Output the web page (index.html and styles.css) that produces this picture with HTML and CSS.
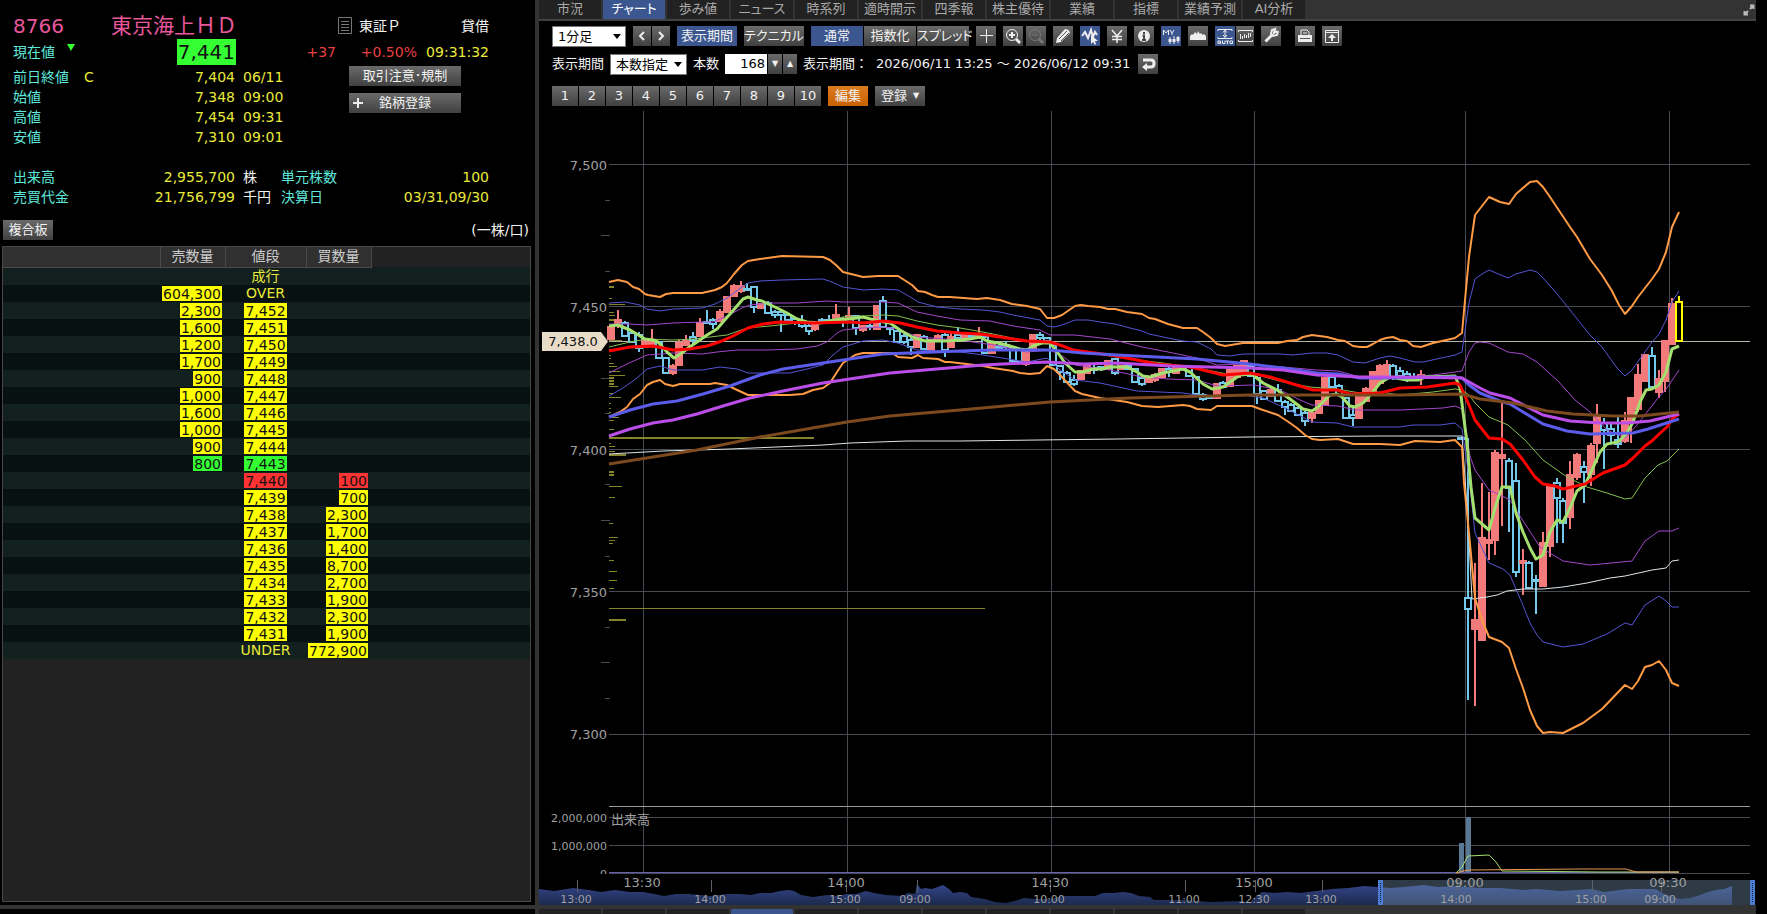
FILE: index.html
```html
<!DOCTYPE html>
<html lang="ja">
<head>
  <meta charset="UTF-8">
  <title>8766 東京海上ＨＤ</title>
  <meta name="viewport" content="width=device-width, initial-scale=1">
  <link rel="stylesheet" href="styles.css">
</head>
<body>

  <main class="workspace">
    <section class="board">
      <div class="quote">
        <div class="quote-head">
          <span class="code">8766</span>
          <h1>東京海上ＨＤ</h1>
          <svg class="doc-icon" width="14" height="17" viewBox="0 0 14 17"><path d="M.5.5h13v16H.5zM3 4.500h8M3 7.500h8M3 10.500h8M3 13.500h8"/></svg>
          <span class="market">東証Ｐ</span>
          <span class="margin-type">貸借</span>
        </div>
        <div class="price-row">
          <span class="label">現在値</span>
          <svg class="down-mark" width="8" height="7" viewBox="0 0 8 7"><path d="M0 0h8L4 7z"/></svg>
          <span class="price-box"><span class="price">7,441</span></span>
          <span class="change">+37</span>
          <span class="percent">+0.50%</span>
          <time class="time">09:31:32</time>
        </div>
        <div class="detail">
          <div class="detail-rows">
            <div class="row"><span class="label">前日終値</span><span class="flag">C</span><span class="value">7,404</span><span>06/11</span></div>
            <div class="row"><span class="label">始値</span><span class="flag"></span><span class="value">7,348</span><span>09:00</span></div>
            <div class="row"><span class="label">高値</span><span class="flag"></span><span class="value">7,454</span><span>09:31</span></div>
            <div class="row"><span class="label">安値</span><span class="flag"></span><span class="value">7,310</span><span>09:01</span></div>
          </div>
          <div class="detail-buttons">
            <button class="btn">取引注意･規制</button>
            <button class="btn btn-add"><svg width="10" height="10" viewBox="0 0 10 10"><path d="M5 0v10M0 5h10"/></svg>銘柄登録</button>
          </div>
        </div>
        <div class="totals">
          <div class="row"><span class="label">出来高</span><span class="value">2,955,700</span><span class="unit">株</span><span class="label">単元株数</span><span class="last">100</span></div>
          <div class="row"><span class="label">売買代金</span><span class="value">21,756,799</span><span class="unit">千円</span><span class="label">決算日</span><span class="last">03/31,09/30</span></div>
        </div>
      </div>

      <div class="board-bar">
        <button class="btn">複合板</button>
        <span>(一株/口)</span>
      </div>

      <div class="depth">
        <table>
          <colgroup><col class="c-blank"><col class="c-qty"><col class="c-price"><col class="c-qty"><col></colgroup>
          <thead>
            <tr><th></th><th>売数量</th><th>値段</th><th>買数量</th><td></td></tr>
          </thead>
          <tbody>
            <tr><td></td><td></td><td>成行</td><td></td><td></td></tr>
            <tr><td></td><td><b>604,300</b></td><td>OVER</td><td></td><td></td></tr>
            <tr><td></td><td><b>2,300</b></td><td><b>7,452</b></td><td></td><td></td></tr>
            <tr><td></td><td><b>1,600</b></td><td><b>7,451</b></td><td></td><td></td></tr>
            <tr><td></td><td><b>1,200</b></td><td><b>7,450</b></td><td></td><td></td></tr>
            <tr><td></td><td><b>1,700</b></td><td><b>7,449</b></td><td></td><td></td></tr>
            <tr><td></td><td><b>900</b></td><td><b>7,448</b></td><td></td><td></td></tr>
            <tr><td></td><td><b>1,000</b></td><td><b>7,447</b></td><td></td><td></td></tr>
            <tr><td></td><td><b>1,600</b></td><td><b>7,446</b></td><td></td><td></td></tr>
            <tr><td></td><td><b>1,000</b></td><td><b>7,445</b></td><td></td><td></td></tr>
            <tr><td></td><td><b>900</b></td><td><b>7,444</b></td><td></td><td></td></tr>
            <tr class="best-ask"><td></td><td><b>800</b></td><td><b>7,443</b></td><td></td><td></td></tr>
            <tr class="best-bid"><td></td><td></td><td><b>7,440</b></td><td><b>100</b></td><td></td></tr>
            <tr><td></td><td></td><td><b>7,439</b></td><td><b>700</b></td><td></td></tr>
            <tr><td></td><td></td><td><b>7,438</b></td><td><b>2,300</b></td><td></td></tr>
            <tr><td></td><td></td><td><b>7,437</b></td><td><b>1,700</b></td><td></td></tr>
            <tr><td></td><td></td><td><b>7,436</b></td><td><b>1,400</b></td><td></td></tr>
            <tr><td></td><td></td><td><b>7,435</b></td><td><b>8,700</b></td><td></td></tr>
            <tr><td></td><td></td><td><b>7,434</b></td><td><b>2,700</b></td><td></td></tr>
            <tr><td></td><td></td><td><b>7,433</b></td><td><b>1,900</b></td><td></td></tr>
            <tr><td></td><td></td><td><b>7,432</b></td><td><b>2,300</b></td><td></td></tr>
            <tr><td></td><td></td><td><b>7,431</b></td><td><b>1,900</b></td><td></td></tr>
            <tr><td></td><td></td><td>UNDER</td><td><b>772,900</b></td><td></td></tr>
          </tbody>
        </table>
      </div>
    </section>

    <section class="chart-panel">
      <nav class="tabs">
        <button>市況</button>
        <button class="active">チャート</button>
        <button>歩み値</button>
        <button>ニュース</button>
        <button>時系列</button>
        <button>適時開示</button>
        <button>四季報</button>
        <button>株主優待</button>
        <button>業績</button>
        <button>指標</button>
        <button>業績予測</button>
        <button>AI分析</button>
        <button class="expand" aria-label="拡大"><svg width="12" height="12" viewBox="0 0 12 12"><path d="M7 1.500h3.500V5M10 2L7 5M5 10.500H1.500V7M2 10l3-3"/></svg></button>
      </nav>

      <div class="toolbar">
        <div class="tools tools-main">
          <span class="select"><select class="foot" aria-label="足種"><option>1分足</option></select></span>
          <span class="group">
            <button class="btn narrow" aria-label="前へ"><svg width="8" height="10" viewBox="0 0 8 10"><path d="M6 1L2 5l4 4"/></svg></button>
            <button class="btn narrow" aria-label="次へ"><svg width="8" height="10" viewBox="0 0 8 10"><path d="M2 1l4 4-4 4"/></svg></button>
          </span>
          <button class="btn wide on">表示期間</button>
          <button class="btn wide">テクニカル</button>
          <span class="group">
            <button class="btn mode on">通常</button>
            <button class="btn mode">指数化</button>
            <button class="btn mode">スプレッド</button>
          </span>
          <button class="btn icon" aria-label="十字"><svg viewBox="0 0 20 20"><path d="M10.500 3v14M4 9.500h13"/></svg></button>
          <span class="group group-zoom">
            <button class="btn icon" aria-label="拡大"><svg viewBox="0 0 20 20"><circle cx="9" cy="9" r="5.500"/><path d="M13 13l4 4" stroke-width="3"/><path d="M9 6v6M6 9h6" stroke-width="2"/></svg></button>
            <button class="btn icon off" aria-label="縮小"><svg viewBox="0 0 20 20"><circle cx="9" cy="9" r="5.500"/><path d="M13 13l4 4" stroke-width="3"/><path d="M6 9h6"/></svg></button>
          </span>
          <button class="btn icon" aria-label="描画"><svg viewBox="0 0 20 20"><path class="fill" d="M3 17l1-5 8-9q4 0 5 4l-9 9z"/><path d="M6 13l8-8M8 15l8-8" stroke="#555"/></svg></button>
          <button class="btn icon on" aria-label="選択"><svg viewBox="0 0 20 20"><path d="M2 10l3-4 3 6 3-8 2 7 2-5 2 3" stroke-width="2"/><path class="fill" d="M11 9v9l2-2 2 3 1-1-1-3h3z"/></svg></button>
          <button class="btn icon" aria-label="円"><svg viewBox="0 0 20 20"><path d="M5 4l5 6 5-6M10 10v7M5 10.500h10M5 13.500h10" stroke-width="1.500"/></svg></button>
          <button class="btn icon" aria-label="情報"><svg viewBox="0 0 20 20"><circle class="fill" cx="10" cy="10" r="6"/><path d="M10 6v2M8.500 9.500H10V14M8 14h4" stroke="#444" stroke-width="2"/></svg></button>
          <button class="btn icon on" aria-label="MYチャート"><svg viewBox="0 0 20 20"><path d="M2.500 9V4L5 7l2.500-3v5M9 4l2 3 2-3M11 7v2M9 11v7M13 10v8M17 10v7"/><path d="M9 13v3M13 13v3M17 11v4" stroke-width="3"/></svg></button>
          <button class="btn icon" aria-label="山"><svg viewBox="0 0 20 20"><path class="fill" d="M2 14v-4l2-2 1 1 2-3 2 2 1-3 2 3 1-1 2 2 1-1 2 2v4z"/></svg></button>
          <span class="group">
            <button class="btn icon on" aria-label="自動"><svg viewBox="0 0 20 20"><path d="M3 5V3.500h14V5M3 11v1.500h14V11M10 5v6M8 6.500L10 4l2 2.500M8 9l2 2.500L12 9"/><path d="M3 18v-3h2.500v3M3 17h2.500M7.500 14.500v3H10v-3M11 15h3M12.500 15v3M15 15h2.500v2.500H15z"/></svg></button>
            <button class="btn icon fit" aria-label="固定"><svg viewBox="0 0 18 20"><path d="M2.500 6V4.500h14V6M2.500 14v1.500h14V14M4.500 8v5M6.500 10v3M8.500 8v4M10.500 9v3M12.500 7v5M14.500 7v4"/></svg></button>
          </span>
          <button class="btn icon" aria-label="設定"><svg viewBox="0 0 20 20"><path d="M4.500 15.500l6-6" stroke-width="3"/><path d="M16 5l-3 2 1-4-3 1-1 4 2 2 4-1 1-4" stroke-width="2"/></svg></button>
          <span class="group group-print">
            <button class="btn icon" aria-label="印刷"><svg viewBox="0 0 20 20"><path d="M6 9V4h6l2 2v3M8 7h4" /><path class="fill" d="M3 9h14v7H3z"/><path d="M5 12.500h10" stroke="#555"/></svg></button>
            <button class="btn icon" aria-label="出力"><svg viewBox="0 0 20 20"><path d="M3.500 4.500h13v12h-13zM3 6.500h14"/><path class="fill" d="M10 8l4 4h-3v3H9v-3H6z"/></svg></button>
          </span>
        </div>

        <div class="tools tools-range">
          <label for="range">表示期間</label>
          <span class="select"><select id="range" class="range"><option>本数指定</option></select></span>
          <label for="count">本数</label>
          <span class="group">
            <input id="count" type="text" value="168">
            <button class="btn step" aria-label="減らす">▼</button>
            <button class="btn step" aria-label="増やす">▲</button>
          </span>
          <span>表示期間：</span>
          <span class="dates">2026/06/11 13:25 ～ 2026/06/12 09:31</span>
          <button class="btn icon" aria-label="戻す"><svg viewBox="0 0 20 20"><path d="M5 6h8q3 0 3 3.500T13 13H8" stroke-width="3"/><path class="fill" d="M9 9v8l-5-4z"/></svg></button>
        </div>

        <div class="tools">
          <span class="group">
            <button class="btn num">1</button>
            <button class="btn num">2</button>
            <button class="btn num">3</button>
            <button class="btn num">4</button>
            <button class="btn num">5</button>
            <button class="btn num">6</button>
            <button class="btn num">7</button>
            <button class="btn num">8</button>
            <button class="btn num">9</button>
            <button class="btn num">10</button>
          </span>
          <button class="btn edit">編集</button>
          <button class="btn save">登録<i>▼</i></button>
        </div>
      </div>

      <svg class="chart" viewBox="539 107 1228 798">
        <defs>
          <linearGradient id="navFill" x1="0" y1="0" x2="0" y2="1">
            <stop offset="0" stop-color="#34458a"/>
            <stop offset="1" stop-color="#1c2a4c"/>
          </linearGradient>
        </defs>

        <!-- グリッド -->
        <g class="grid">
          <path d="M609 164.500H1750M609 306.500H1750M609 449.500H1750M609 591.500H1750M609 734.500H1750M609 817.500H1750M609 845.500H1750M609 873.500H1750"/>
          <path d="M643.500 111V874M847.500 111V874M1051.500 111V874M1254.500 111V874M1465.500 111V874M1669.500 111V874"/>
          <path d="M605 200.500h5M601 235.500h9M605 271.500h5M601 378.500h9M605 413.500h5M605 484.500h5M601 520.500h9M605 556.500h5M605 627.500h5M601 662.500h9M605 698.500h5"/>
          <path class="divider" d="M609 806.500H1750"/>
        </g>

        <!-- 価格帯別出来高 -->
        <path class="profile" d="M609 298.500h3M609 304.500h16M609 312.500h5M609 315.500h6M609 330.500h5M609 340.500h13M609 349.500h3M609 355.500h2M609 358.500h2M609 363.500h5M609 366.500h8M609 371.500h11M609 375.500h16M609 386.500h9M609 393.500h5M609 397.500h12M609 403.500h2M609 408.500h2M609 412.500h2M609 417.500h10M609 420.500h5M609 429.500h5M609 443.500h2M609 446.500h6M609 451.500h6M609 486.500h13M609 497.500h6M609 523.500h4M609 537.500h9M609 540.500h6M609 543.500h4M609 560.500h5M609 571.500h8M609 580.500h8M609 588.500h5M609 608.500h376"/>
        <path class="profile thick" d="M609 287h5M609 320h6M609 326h6M609 378h5M609 381h5M609 384h5M609 438h205M609 455h17M609 472h5M609 475h5M609 620h17"/>

        <path class="last-line" d="M609 341.500H1750"/>
        <g id="candles"></g>

        <!-- ボリンジャーバンド -->
        <polyline class="thin blue" points="609,303 625,302 640,305 647,309 660,311 673,309 702,308 715,304 727,298 742,287 748,283 760,281 782,280 823,279 832,282 843,287 863,290 883,289 898,290 912,298 918,302 937,307 960,309 983,310 1000,312 1013,315 1040,320 1047,326 1054,327 1062,325 1075,320 1088,320 1100,322 1115,324 1130,328 1142,331 1149,334 1168,338 1183,341 1197,342 1211,349 1217,355 1230,356 1243,354 1263,354 1280,354 1293,355 1312,353 1327,353 1338,355 1353,362 1365,363 1380,358 1390,356 1400,358 1415,362 1423,362 1455,355 1462,352 1469,303 1475,279 1482,274 1489,270 1508,278 1516,274 1530,270 1537,272 1543,278 1558,295 1570,310 1590,335 1602,347 1617,368 1625,376 1632,370 1652,342 1659,334 1666,320 1672,302 1679,291"/>
        <polyline class="thin purple" points="609,324 630,324 647,325 673,323 702,322 713,322 727,316 742,308 750,305 770,303 797,303 827,301 843,302 883,302 898,303 917,312 937,316 960,320 990,321 1013,326 1040,330 1050,335 1075,335 1110,339 1142,347 1168,352 1197,358 1217,365 1243,364 1283,367 1317,370 1338,371 1360,377 1380,377 1400,377 1433,375 1455,372 1462,371 1469,352 1475,343 1480,342 1489,343 1508,352 1523,354 1537,362 1558,381 1575,400 1590,412 1607,430 1625,438 1637,425 1658,398 1667,388 1679,370"/>
        <polyline class="thin green" points="609,347 630,342 647,339 673,340 693,339 710,337 727,335 747,328 770,326 797,323 817,323 843,317 863,316 883,315 898,316 917,321 937,325 960,328 983,332 1027,341 1050,342 1075,350 1110,356 1137,360 1163,363 1197,368 1227,374 1250,373 1283,382 1310,387 1337,389 1360,393 1380,392 1400,395 1433,392 1455,389 1462,390 1469,395 1475,403 1489,417 1508,425 1525,440 1543,460 1567,477 1587,487 1607,493 1625,499 1632,498 1645,478 1658,465 1667,461 1679,449"/>
        <polyline class="thin purple" points="609,373 627,364 647,355 673,353 702,354 717,352 737,350 767,350 797,349 817,346 827,342 837,333 843,330 863,328 883,327 898,329 917,337 960,340 1000,346 1027,352 1050,350 1062,356 1075,365 1110,370 1142,377 1168,379 1197,380 1217,386 1254,385 1280,390 1300,400 1312,405 1338,406 1355,410 1380,410 1400,410 1443,408 1455,406 1462,409 1470,456 1475,470 1489,490 1500,495 1510,500 1518,513 1540,547 1563,561 1590,565 1632,561 1645,541 1659,531 1672,531 1679,528"/>
        <polyline class="thin blue" points="609,396 623,388 637,378 647,369 660,366 673,370 702,370 720,367 737,369 748,373 790,373 807,369 823,365 833,355 843,347 863,341 883,340 898,343 917,350 960,352 983,355 1027,362 1047,358 1060,370 1075,380 1100,383 1137,391 1183,393 1203,396 1243,395 1263,398 1283,407 1312,422 1337,423 1353,427 1380,427 1400,427 1413,425 1440,425 1455,423 1462,429 1469,477 1475,533 1489,563 1503,569 1510,575 1522,603 1530,623 1537,635 1543,642 1563,647 1583,644 1607,634 1625,623 1632,625 1645,605 1659,596 1666,601 1672,607 1679,607"/>
        <polyline class="thin white" points="609,454 663,451 730,449 823,445 850,443 907,441 960,441 1117,439 1250,437 1380,436 1462,436 1468,520 1472,599 1487,597 1497,595 1507,591 1523,589 1543,589 1563,587 1587,583 1610,578 1625,576 1652,570 1666,568 1672,561 1679,560"/>
        <polyline class="band" points="609,282 618,280 627,282 633,287 639,289 645,294 648,295 660,297 666,294 673,293 702,293 715,290 722,287 727,283 734,274 742,265 748,261 760,259 782,256 823,257 830,260 837,266 843,272 863,277 878,276 898,276 912,285 918,291 925,292 932,295 938,297 950,297 977,299 987,298 1000,300 1012,304 1027,306 1040,309 1047,318 1054,318 1062,315 1075,306 1081,305 1088,306 1100,307 1108,309 1115,309 1127,312 1142,314 1149,318 1155,319 1168,324 1183,328 1197,328 1203,332 1211,338 1217,344 1225,346 1243,343 1278,343 1287,341 1297,340 1303,337 1312,335 1327,337 1338,340 1345,341 1353,346 1360,347 1367,347 1373,344 1380,340 1386,338 1393,337 1400,340 1407,341 1413,346 1421,347 1433,343 1442,341 1455,338 1462,333 1465,300 1469,257 1475,215 1482,206 1489,197 1500,202 1509,204 1516,194 1530,182 1537,181 1543,187 1550,197 1558,209 1570,227 1577,237 1590,259 1602,275 1612,291 1619,305 1625,314 1632,306 1638,297 1652,279 1659,269 1666,252 1672,227 1679,212"/>
        <polyline class="band" points="609,417 620,412 627,407 633,399 640,394 647,385 653,382 660,380 665,384 673,386 680,384 710,384 715,383 727,385 735,389 748,395 790,395 803,394 813,390 823,388 830,383 837,372 843,363 855,355 863,353 892,353 898,357 912,358 918,355 923,358 938,359 945,362 950,362 983,366 993,368 1013,371 1020,373 1030,374 1040,373 1047,366 1054,369 1060,375 1075,391 1082,394 1100,398 1127,402 1142,406 1158,407 1183,405 1190,406 1197,409 1211,410 1217,406 1252,406 1260,409 1278,415 1290,423 1297,428 1305,435 1312,439 1320,440 1338,439 1353,444 1380,444 1400,445 1415,441 1440,442 1455,440 1462,447 1464,483 1469,533 1475,598 1482,620 1489,637 1502,642 1509,648 1516,669 1523,688 1530,710 1537,726 1543,733 1550,732 1563,733 1583,723 1602,709 1625,685 1632,689 1638,681 1645,667 1652,665 1659,661 1666,670 1672,683 1679,686"/>

        <!-- 移動平均線 -->
        <polyline class="ma lime" points="609,326 618,325 630,330 645,339 653,340 658,342 667,352 674,358 682,353 688,348 697,342 707,335 717,329 723,322 730,314 737,306 743,299 748,297 757,300 762,301 777,308 787,313 797,319 807,322 820,323 837,320 850,319 863,317 878,321 890,323 900,330 912,337 925,341 933,341 945,341 960,340 970,339 980,337 987,341 1003,344 1020,349 1027,350 1033,346 1042,343 1050,343 1058,353 1065,363 1075,372 1083,372 1093,369 1103,369 1110,367 1127,367 1137,372 1143,376 1150,377 1163,373 1183,369 1190,372 1203,384 1212,389 1223,387 1240,375 1252,374 1263,383 1277,390 1290,399 1303,409 1312,411 1318,407 1330,395 1337,394 1342,397 1350,406 1355,407 1363,403 1372,393 1380,383 1390,377 1407,380 1418,380 1425,377 1455,376 1460,388 1467,443 1471,487 1475,518 1489,530 1495,508 1502,487 1510,487 1516,513 1523,532 1530,548 1536,559 1543,555 1550,532 1557,520 1563,522 1570,508 1577,491 1585,485 1592,470 1600,452 1607,444 1618,442 1627,433 1633,422 1640,402 1646,390 1652,389 1659,385 1666,372 1672,349 1679,346"/>
        <polyline class="ma red" points="609,351 630,347 653,346 663,348 673,350 690,349 707,346 722,341 733,336 748,328 763,324 780,322 813,323 850,322 863,323 883,321 900,323 917,327 937,331 960,333 980,334 1000,337 1027,341 1050,342 1060,345 1073,350 1110,355 1137,360 1157,364 1190,367 1203,370 1223,375 1250,373 1270,377 1290,383 1313,390 1337,390 1350,394 1380,393 1400,388 1427,387 1455,383 1460,385 1469,405 1475,420 1489,438 1502,439 1510,444 1523,460 1535,477 1543,484 1555,486 1563,489 1585,484 1603,473 1625,465 1633,458 1645,446 1653,440 1658,435 1667,427 1673,418 1679,414"/>
        <polyline class="ma blue" points="609,417 630,410 653,404 677,401 703,394 730,386 760,375 783,369 823,363 863,357 883,354 960,351 993,350 1050,350 1083,353 1117,355 1197,359 1250,364 1283,368 1317,373 1338,374 1360,378 1380,378 1455,377 1462,378 1469,385 1480,393 1500,401 1510,404 1543,424 1567,431 1590,434 1633,433 1648,429 1679,419"/>
        <polyline class="ma purple" points="609,436 630,429 653,423 673,420 697,414 723,406 750,398 783,391 823,383 863,377 890,373 960,367 983,365 1047,362 1083,364 1117,363 1170,366 1250,368 1283,370 1317,375 1360,377 1400,377 1462,378 1480,388 1490,393 1510,398 1543,415 1570,421 1600,423 1627,423 1650,421 1679,414"/>
        <polyline class="ma brown" points="609,464 697,450 760,437 847,422 890,416 960,410 1050,402 1130,398 1250,395 1283,395 1380,395 1400,395 1462,394 1480,399 1513,403 1547,411 1573,414 1613,416 1640,416 1679,412"/>

        <!-- 出来高 -->
        <path class="volume" d="M1459 843h5v30h-5zM1466 817h5v56h-5z"/>
        <path class="volume-base" d="M609 872.500H1679"/>
        <polyline class="thin lime" points="1456,873 1462,867 1468,856 1489,855 1496,862 1502,871 1600,872 1679,872"/>
        <polyline class="thin orange" points="1456,873 1468,870 1580,869 1626,869 1636,872 1679,872"/>

        <g class="axis">
          <g text-anchor="end">
            <text x="607" y="170">7,500</text>
            <text x="607" y="312">7,450</text>
            <text x="607" y="455">7,400</text>
            <text x="607" y="597">7,350</text>
            <text x="607" y="739">7,300</text>
            <g class="small">
              <text x="607" y="822">2,000,000</text>
              <text x="607" y="850">1,000,000</text>
              <svg x="590" y="865" width="20" height="9" viewBox="590 865 20 9"><text x="607" y="878">0</text></svg>
            </g>
          </g>
          <text x="611" y="824">出来高</text>
        </g>
        <path class="tag" d="M542 332h59l7 9.500-7 9.500h-59z"/>
        <text class="tag-text" x="573" y="346" text-anchor="middle">7,438.0</text>

        <!-- ナビゲーター -->
        <g class="navigator">
          <path fill="url(#navFill)" d="M539 905V889L554 891L573 888L589 890L601 892L615 890L630 892L643 892L654 894L664 896L676 894L688 894L700 895L710 896L728 894L740 894L751 895L760 893L771 893L780 891L789 890L794 891L801 895L813 897L827 895L838 896L846 894L856 894L866 891L874 893L886 895L902 896L908 893L915 894L917 884L921 889L925 888L932 889L943 885L949 889L953 893L960 892L967 893L971 897L985 899L995 902L1006 903L1014 901L1024 898L1034 899L1052 899L1062 896L1076 896L1095 896L1103 893L1113 893L1123 892L1131 893L1139 896L1150 897L1154 900L1184 900L1210 902L1240 901L1250 902L1254 898L1262 892L1274 893L1288 892L1300 893L1316 891L1332 889L1348 888L1364 886L1378 887L1390 888L1404 887L1424 885L1438 887L1456 886L1480 888L1500 888L1512 889L1524 890L1536 889L1560 891L1592 889L1604 892L1628 889L1656 889L1659 891L1662 893L1670 896L1680 899L1690 898L1700 895L1708 892L1716 890L1724 889L1732 886V905z"/>
          <rect class="selection" x="1380" y="880" width="373" height="25"/>
          <path class="ticks" d="M577.500 880v12M711.500 880v12M846.500 880v12M917.500 880v12M1050.500 880v12M1185.500 880v12M1255.500 880v12M1322.500 880v12M1457.500 880v12M1592.500 880v12M1661.500 880v12"/>
          <path class="handle" d="M1378 880h5v25h-5zM1750 880h5v25h-5z"/>
          <path class="grip" d="M1380.500 883v19M1752.500 883v19"/>
        </g>
        <g class="axis" text-anchor="middle">
          <text x="642" y="887">13:30</text>
          <text x="846" y="887">14:00</text>
          <text x="1050" y="887">14:30</text>
          <text x="1254" y="887">15:00</text>
          <text x="1465" y="887">09:00</text>
          <text x="1668" y="887">09:30</text>
          <g class="small">
            <text x="576" y="903">13:00</text>
            <text x="710" y="903">14:00</text>
            <text x="845" y="903">15:00</text>
            <text x="915" y="903">09:00</text>
            <text x="1049" y="903">10:00</text>
            <text x="1184" y="903">11:00</text>
            <text x="1254" y="903">12:30</text>
            <text x="1321" y="903">13:00</text>
            <text x="1456" y="903">14:00</text>
            <text x="1591" y="903">15:00</text>
            <text x="1660" y="903">09:00</text>
          </g>
        </g>
      </svg>
    </section>
  </main>

  <footer class="bottom-tabs">
    <span></span><span></span><span></span><span class="active"></span><span></span><span></span><span></span><span></span><span></span><span></span><span></span><span></span>
  </footer>

  <script src="script.js"></script>
</body>
</html>
```

FILE: styles.css
```css
:root {
  --line: #333;
  --tab: #222;
  --blue: #3c578f;
  --yellow: #eaea38;
  --cyan: #5fe8dc;
  --text: #f2f2f2;
}

* {
  box-sizing: border-box;
}

body {
  margin: 0;
  min-height: 100vh;
  display: flex;
  flex-direction: column;
  background: #000;
  color: var(--text);
  font: 14px/20px "DejaVu Sans", "Noto Sans CJK JP", sans-serif;
}

button, select, input {
  font: inherit;
  color: inherit;
  margin: 0;
  padding: 0;
  border: 0;
  border-radius: 0;
}

button {
  cursor: pointer;
}

.workspace {
  flex: 1;
  display: grid;
  grid-template-columns: 535px minmax(0, 1fr);
}

/* 銘柄情報 */
.board {
  display: flex;
  flex-direction: column;
  padding-bottom: 3px;
}

.quote {
  padding: 12px 46px 0 13px;
  color: var(--yellow);
}

.quote .label {
  color: var(--cyan);
}

.quote-head {
  display: flex;
  align-items: center;
  height: 27px;
  color: var(--text);
}

.code, h1 {
  margin: 0;
  font-size: 21px;
  font-weight: normal;
  color: #e8579b;
}

.code {
  width: 98px;
  font-size: 20px;
}

h1 {
  width: 227px;
}

.doc-icon {
  fill: none;
  stroke: #777;
}

.market {
  margin-left: 7px;
}

.margin-type {
  margin-left: auto;
}

.price-row {
  display: flex;
  align-items: center;
  height: 26px;
}

.price-row .label {
  width: 54px;
}

.down-mark {
  align-self: flex-start;
  margin-top: 5px;
  fill: #3f3;
}

.price-box {
  width: 161px;
  text-align: right;
}

.price {
  display: inline-block;
  padding: 0 1px;
  background: #3f3;
  color: #111;
  font-size: 20px;
  line-height: 26px;
}

.change, .percent {
  color: #e84040;
  text-align: right;
}

.change {
  width: 100px;
}

.percent {
  width: 81px;
}

.time {
  margin-left: auto;
}

.detail {
  display: flex;
  justify-content: space-between;
  padding: 1px 28px 20px 0;
}

.row {
  display: flex;
  height: 20px;
}

.detail-rows {
  padding-top: 1px;
}

.detail .label {
  width: 71px;
}

.flag {
  width: 50px;
}

.detail .value {
  width: 101px;
  margin-right: 8px;
  text-align: right;
}

.detail-buttons {
  width: 112px;
  display: flex;
  flex-direction: column;
  gap: 7px;
}

.btn {
  height: 20px;
  color: var(--text);
  line-height: 18px;
  font-size: 13px;
  font-feature-settings: "palt";
  background: linear-gradient(#6a6a6a, #404040);
  white-space: nowrap;
}

.btn-add {
  display: flex;
  align-items: center;
  gap: 16px;
  padding-left: 4px;
}

.btn-add svg {
  stroke: #eee;
  stroke-width: 2;
}

.totals .row > .label:first-child {
  width: 90px;
}

.totals .value {
  width: 132px;
  text-align: right;
}

.unit {
  width: 38px;
  margin-left: 8px;
  color: var(--text);
}

.last {
  margin-left: auto;
}

.board-bar {
  display: flex;
  justify-content: space-between;
  align-items: center;
  padding: 13px 6px 6px 3px;
}

.board-bar .btn {
  width: 50px;
}

/* 板 */
.depth {
  flex: 1;
  margin: 0 4px 0 2px;
  border: 1px solid #484848;
  background: #222;
}

table {
  width: 100%;
  table-layout: fixed;
  border-collapse: collapse;
}

.c-blank {
  width: 157px;
}

.c-qty {
  width: 65px;
}

.c-price {
  width: 81px;
}

thead tr {
  height: 20px;
}

th {
  padding: 0;
  border-right: 1px solid #4a4a4a;
  border-bottom: 1px solid #4a4a4a;
  background: #303030;
  color: #ccc;
  font-weight: normal;
  line-height: 19px;
}

tbody tr {
  height: 17px;
  background: #12201f;
}

tbody tr:nth-child(even) {
  background: #081112;
}

tbody td {
  height: 17px;
  padding: 0;
  color: var(--yellow);
  line-height: 17px;
  text-align: center;
}

tbody td:nth-child(2), tbody td:nth-child(4) {
  padding-right: 3px;
  text-align: right;
}

td b {
  display: inline-block;
  height: 15px;
  padding: 0 1px;
  overflow: hidden;
  background: #ff0;
  color: #111;
  font-weight: normal;
  line-height: 17px;
  vertical-align: top;
  margin-top: 1px;
}

.best-ask b {
  background: #3f3;
}

.best-bid b {
  background: #f33;
}

/* チャート */
.chart-panel {
  border-left: 4px solid var(--line);
}

.tabs {
  display: flex;
  gap: 2px;
  height: 21px;
  margin-right: 11px;
  border-bottom: 2px solid #424242;
  background: var(--line);
}

.tabs button {
  width: 62px;
  height: 19px;
  background: var(--tab);
  color: #aaa;
  font-size: 13px;
  line-height: 16px;
  font-feature-settings: "palt";
  padding-bottom: 2px;
}

.tabs .active {
  background: var(--blue);
  color: #fff;
}

.tabs .expand {
  width: 12px;
  margin-left: auto;
  margin-right: 1px;
  padding: 1px 0 0;
  background: none;
}

.expand svg {
  display: block;
  fill: none;
  stroke: #bbb;
  stroke-width: 2;
}

.toolbar {
  height: 86px;
  padding: 5px 0 0 13px;
  font-size: 13px;
}

.tools {
  display: flex;
  align-items: center;
  gap: 7px;
  height: 20px;
  white-space: nowrap;
}

.tools-range {
  gap: 6px;
  margin: 8px 0 12px;
}

.group {
  display: flex;
  gap: 1px;
}

.group-zoom {
  gap: 3px;
}

.group-print {
  gap: 7px;
  margin-left: 7px;
}

.select {
  position: relative;
  display: flex;
}

.select::after {
  content: "";
  position: absolute;
  right: 5px;
  top: 8px;
  border: 4px solid transparent;
  border-top: 5px solid #000;
  border-bottom: 0;
  pointer-events: none;
}

select {
  appearance: none;
  height: 21px;
  padding-left: 5px;
  border: 1px solid #777;
  background: #fff;
  color: #000;
}

.foot {
  width: 74px;
}

.range {
  width: 77px;
}

.narrow {
  width: 18px;
}

.wide {
  width: 60px;
}

.mode {
  width: 52px;
}

.icon {
  width: 20px;
}

.icon.fit {
  width: 18px;
}

.icon svg {
  display: block;
  width: 100%;
  height: 20px;
}

.btn svg {
  fill: none;
  stroke: #eee;
}

.narrow svg {
  display: block;
  margin: 0 auto;
  stroke-width: 2;
}

.btn .fill {
  fill: #eee;
  stroke: none;
}

.btn.off svg {
  stroke: #777;
}

.btn.on {
  background: var(--blue);
}

#count {
  width: 42px;
  height: 20px;
  padding-right: 2px;
  background: #fff;
  color: #000;
  text-align: right;
}

.step {
  width: 14px;
  font-size: 8px;
}

.dates {
  margin: 0 2px;
}

.num {
  width: 26px;
}

.edit {
  width: 40px;
  background: linear-gradient(#dc7c20, #c86000);
}

.save {
  width: 50px;
}

.save i {
  margin-left: 6px;
  font-size: 8px;
  font-style: normal;
  vertical-align: 2px;
}

.chart {
  display: block;
  width: 100%;
}

.chart polyline {
  fill: none;
  stroke-linejoin: round;
}

.grid path, .profile, .last-line, .volume-base, .ticks {
  fill: none;
  stroke: #484b52;
}

.grid .divider {
  stroke: #999;
}

.chart .profile {
  stroke: #84842a;
}

.profile.thick {
  stroke-width: 2;
}

.chart .last-line {
  stroke: #b4b4a4;
}

.thin {
  stroke-width: 1;
}

.band {
  stroke: #ff9a45;
  stroke-width: 2;
}

.ma {
  stroke-width: 3;
}

.thin.blue {
  stroke: #5555d4;
}

.thin.purple {
  stroke: #a446cc;
}

.thin.green {
  stroke: #86c050;
}

.thin.white {
  stroke: #dde6e8;
}

.thin.orange {
  stroke: #e89858;
}

.lime {
  stroke: #a4e070;
}

.ma.red {
  stroke: #f00;
}

.ma.blue {
  stroke: #5c5cea;
}

.ma.purple {
  stroke: #bb4de8;
}

.ma.brown {
  stroke: #7c4a1e;
}

.up {
  fill: #f27a7a;
  stroke: #f27a7a;
  stroke-width: 2;
}

.down {
  fill: #000;
  stroke: #74c8ea;
  stroke-width: 2;
}

.now {
  fill: #000;
  stroke: #ff0;
  stroke-width: 2;
}

.volume {
  fill: #587894;
}

.chart .volume-base {
  stroke: #6660b4;
}

.axis {
  fill: #a0a0a0;
  font-size: 13px;
}

.small {
  font-size: 11px;
}

.tag {
  fill: #e8dcc8;
}

.tag-text {
  fill: #111;
  font-size: 13px;
}

.selection {
  fill: #7898b8;
  fill-opacity: .38;
}

.chart .ticks {
  stroke: #5c6068;
}

.handle {
  fill: #4c7cd0;
}

.grip {
  stroke: #0c1c3c;
  stroke-dasharray: 1 1;
}

.bottom-tabs {
  display: flex;
  gap: 2px;
  height: 9px;
  padding-left: 539px;
  margin-right: 11px;
  border-top: 4px solid var(--line);
  background: linear-gradient(90deg, #000 535px, var(--line) 535px);
}

.bottom-tabs span {
  width: 62px;
  border-radius: 2px 2px 0 0;
  background: var(--tab);
}

.bottom-tabs .active {
  background: var(--blue);
}
```

FILE: script.js
```js
// 1分足: 種別, 高値, 安値, 実体上端, 実体下端 (チャート座標)
const bars = `
u 327 339 327 339|u 310 328 320 323|d 321 336 323 336|d 332 342 333 342|d 332 352 335 348|u 341 347 341 347|u 329 348 340 344|d 342 358 342 358|d 358 373 358 373|u 364 375 366 373
u 340 365 343 365|u 335 346 341 345|d 332 344 337 340|u 318 336 323 336|d 310 323 322 323|d 318 329 320 324|u 309 321 312 321|u 297 312 297 312|u 284 296 286 296|u 281 293 286 291
d 283 291 289 290|d 287 313 287 307|u 303 308 304 308|d 301 314 303 313|d 310 318 312 315|d 311 332 312 315|d 314 322 315 320|d 317 325 319 323|d 315 328 323 326|d 324 335 326 331
u 322 331 324 329|d 318 324 320 322|d 315 322 320 322|u 304 321 315 320|d 317 327 319 322|u 307 320 316 319|d 316 335 316 328|u 325 332 326 330|d 323 330 326 327|u 306 329 306 329
d 296 327 301 327|d 327 335 328 329|d 330 342 331 342|d 334 344 336 342|d 338 355 340 347|u 335 347 335 347|d 335 350 337 349|u 340 350 340 350|u 334 341 336 340|d 332 357 335 350
u 333 348 337 347|d 327 342 335 338|u 333 340 335 339|d 334 339 336 338|u 327 339 334 337|d 337 353 337 353|u 343 353 343 353|d 343 349 346 348|d 341 350 345 347|d 348 361 348 361
d 350 362 350 362|u 350 366 351 364|u 335 348 335 348|d 332 340 335 338|d 337 342 338 341|d 345 365 345 365|d 365 380 366 372|d 371 383 373 382|d 375 386 380 384|u 371 379 371 379
u 365 373 366 373|d 365 374 368 370|d 366 371 367 369|u 360 370 361 369|d 358 375 359 373|u 365 370 366 369|d 365 370 366 369|d 369 382 369 382|d 376 386 378 384|u 377 383 377 382
u 373 382 375 380|u 368 377 369 377|d 366 377 369 372|u 366 373 366 373|u 365 369 366 369|d 365 376 367 376|d 376 394 377 394|d 393 401 395 399|d 395 398 396 398|u 383 398 384 398
d 381 388 383 387|u 370 386 370 386|u 366 377 366 377|u 360 374 361 374|d 364 376 366 376|d 376 404 378 394|d 390 400 391 399|u 388 397 390 396|d 384 402 390 401|d 400 415 402 407
d 403 412 405 411|d 407 416 408 415|d 411 426 413 421|u 413 423 413 418|u 400 413 401 413|u 377 405 378 405|d 375 388 377 387|d 384 397 386 395|d 398 418 398 418|d 405 426 415 418
u 393 418 393 418|u 387 402 389 401|u 371 393 372 393|u 364 384 366 383|u 360 378 365 376|d 364 380 366 378|d 367 377 371 376|d 371 382 374 380|d 373 381 378 380|u 370 385 375 377
-|-|-|-|-|d 438 440 438 439|d 438 700 598 609|u 563 706 620 629|u 483 641 538 640|u 492 560 540 543
u 450 555 453 540|u 403 526 455 458|d 458 532 461 488|d 463 577 481 572|u 549 595 561 563|d 561 589 563 588|d 575 614 580 581|u 532 587 543 586|u 486 557 487 546|d 478 543 483 498
d 498 543 501 523|u 461 529 475 517|u 453 480 455 477|d 461 503 467 472|u 443 486 446 474|u 404 463 415 443|d 418 469 423 430|d 422 442 429 435|d 417 448 440 444|u 412 443 421 441
u 397 443 398 422|u 364 412 375 409|u 354 382 355 381|d 347 387 356 387|u 370 398 379 392|u 340 392 341 381|u 298 345 304 344|n 296 342 302 341`.trim().split(/[|\n]/);

const kinds = { u: 'up', d: 'down', n: 'now' };
const layer = document.getElementById('candles');

bars.forEach((bar, i) => {
  const [kind, high, low, top, bottom] = bar.split(' ');
  if (kind === '-') return;
  const x = Math.round(611.4 + i * 6.8);
  const path = document.createElementNS('http://www.w3.org/2000/svg', 'path');
  path.setAttribute('class', kinds[kind]);
  path.setAttribute('d', `M${x} ${high}V${top}M${x} ${bottom}V${low}M${x - 3} ${top}H${x + 3}V${bottom}H${x - 3}Z`);
  layer.appendChild(path);
});
```
